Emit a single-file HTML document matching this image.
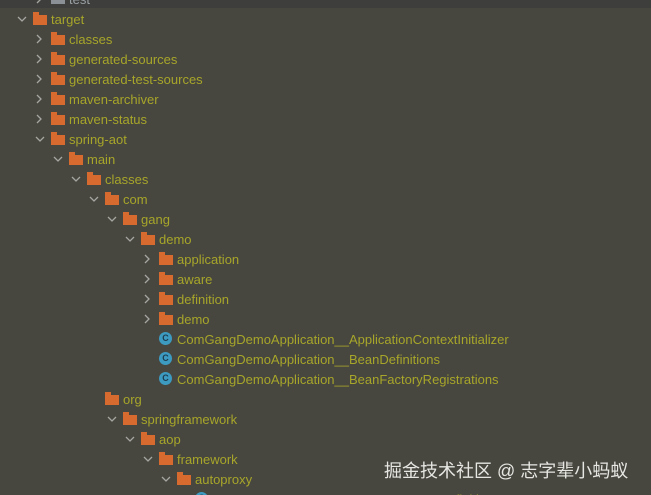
<!DOCTYPE html>
<html><head><meta charset="utf-8"><style>
html,body{margin:0;padding:0;width:651px;height:495px;overflow:hidden}
body{background:#47463f;position:relative;font-family:"Liberation Sans","DejaVu Sans",sans-serif;font-size:13px;color:#a7a62a}
.top{position:absolute;left:0;top:0;width:651px;height:8px;background:#3e3f3c}
.r{position:absolute;height:20px;line-height:21px;white-space:nowrap}
.a{position:absolute;width:14px;height:20px}
.f{position:absolute;top:5px;width:14px;height:11px}
.f::before{content:"";position:absolute;left:0;top:-2px;width:6px;height:3px;background:#d76a2e}
.f::after{content:"";position:absolute;left:0;top:1px;width:14px;height:10px;background:#d76a2e}
.c{position:absolute;top:3px;width:13px;height:13px;border-radius:50%;background:#3d9bc1;color:#1d3d4e;font-size:9px;line-height:13px;text-align:center;font-weight:bold}
.t{position:absolute;top:0}
.wm{position:absolute;left:384px;top:457px;font-family:"Liberation Sans","Noto Sans CJK SC",sans-serif;font-size:18px;color:#e6e6e2;white-space:nowrap}
</style></head><body>
<div class="top"></div>
<svg width="0" height="0" style="position:absolute"><defs>
<path id="rt" d="M4 6 L8 10 L4 14" fill="none" stroke="#a7a7a2" stroke-width="1.3"/>
<path id="dn" d="M3 8 L7 12 L11 8" fill="none" stroke="#a7a7a2" stroke-width="1.3"/>
</defs></svg>

<div class="r" style="top:-11px;left:0;width:651px">
<svg class="a" style="left:33px"><use href="#rt"/></svg>
<div style="position:absolute;left:51px;top:5px;width:14px;height:10px;background:#8a9096"></div>
<span class="t" style="left:69px;color:#9aa0a4">test</span></div>

<div class="r" style="top:9px"><svg class="a" style="left:15px"><use href="#dn"/></svg><div class="f" style="left:33px"></div><span class="t" style="left:51px">target</span></div>
<div class="r" style="top:29px"><svg class="a" style="left:33px"><use href="#rt"/></svg><div class="f" style="left:51px"></div><span class="t" style="left:69px">classes</span></div>
<div class="r" style="top:49px"><svg class="a" style="left:33px"><use href="#rt"/></svg><div class="f" style="left:51px"></div><span class="t" style="left:69px">generated-sources</span></div>
<div class="r" style="top:69px"><svg class="a" style="left:33px"><use href="#rt"/></svg><div class="f" style="left:51px"></div><span class="t" style="left:69px">generated-test-sources</span></div>
<div class="r" style="top:89px"><svg class="a" style="left:33px"><use href="#rt"/></svg><div class="f" style="left:51px"></div><span class="t" style="left:69px">maven-archiver</span></div>
<div class="r" style="top:109px"><svg class="a" style="left:33px"><use href="#rt"/></svg><div class="f" style="left:51px"></div><span class="t" style="left:69px">maven-status</span></div>
<div class="r" style="top:129px"><svg class="a" style="left:33px"><use href="#dn"/></svg><div class="f" style="left:51px"></div><span class="t" style="left:69px">spring-aot</span></div>
<div class="r" style="top:149px"><svg class="a" style="left:51px"><use href="#dn"/></svg><div class="f" style="left:69px"></div><span class="t" style="left:87px">main</span></div>
<div class="r" style="top:169px"><svg class="a" style="left:69px"><use href="#dn"/></svg><div class="f" style="left:87px"></div><span class="t" style="left:105px">classes</span></div>
<div class="r" style="top:189px"><svg class="a" style="left:87px"><use href="#dn"/></svg><div class="f" style="left:105px"></div><span class="t" style="left:123px">com</span></div>
<div class="r" style="top:209px"><svg class="a" style="left:105px"><use href="#dn"/></svg><div class="f" style="left:123px"></div><span class="t" style="left:141px">gang</span></div>
<div class="r" style="top:229px"><svg class="a" style="left:123px"><use href="#dn"/></svg><div class="f" style="left:141px"></div><span class="t" style="left:159px">demo</span></div>
<div class="r" style="top:249px"><svg class="a" style="left:141px"><use href="#rt"/></svg><div class="f" style="left:159px"></div><span class="t" style="left:177px">application</span></div>
<div class="r" style="top:269px"><svg class="a" style="left:141px"><use href="#rt"/></svg><div class="f" style="left:159px"></div><span class="t" style="left:177px">aware</span></div>
<div class="r" style="top:289px"><svg class="a" style="left:141px"><use href="#rt"/></svg><div class="f" style="left:159px"></div><span class="t" style="left:177px">definition</span></div>
<div class="r" style="top:309px"><svg class="a" style="left:141px"><use href="#rt"/></svg><div class="f" style="left:159px"></div><span class="t" style="left:177px">demo</span></div>
<div class="r" style="top:329px"><div class="c" style="left:159px">C</div><span class="t" style="left:177px">ComGangDemoApplication__ApplicationContextInitializer</span></div>
<div class="r" style="top:349px"><div class="c" style="left:159px">C</div><span class="t" style="left:177px">ComGangDemoApplication__BeanDefinitions</span></div>
<div class="r" style="top:369px"><div class="c" style="left:159px">C</div><span class="t" style="left:177px">ComGangDemoApplication__BeanFactoryRegistrations</span></div>
<div class="r" style="top:389px"><div class="f" style="left:105px"></div><span class="t" style="left:123px">org</span></div>
<div class="r" style="top:409px"><svg class="a" style="left:105px"><use href="#dn"/></svg><div class="f" style="left:123px"></div><span class="t" style="left:141px">springframework</span></div>
<div class="r" style="top:429px"><svg class="a" style="left:123px"><use href="#dn"/></svg><div class="f" style="left:141px"></div><span class="t" style="left:159px">aop</span></div>
<div class="r" style="top:449px"><svg class="a" style="left:141px"><use href="#dn"/></svg><div class="f" style="left:159px"></div><span class="t" style="left:177px">framework</span></div>
<div class="r" style="top:469px"><svg class="a" style="left:159px"><use href="#dn"/></svg><div class="f" style="left:177px"></div><span class="t" style="left:195px">autoproxy</span></div>
<div class="r" style="top:489px"><div class="c" style="left:195px">C</div><span class="t" style="left:213px">AutoProxyCreatorAotProcessor__BeanDefinitions</span></div>

<div class="wm">掘金技术社区 @ 志字辈小蚂蚁</div>
</body></html>
